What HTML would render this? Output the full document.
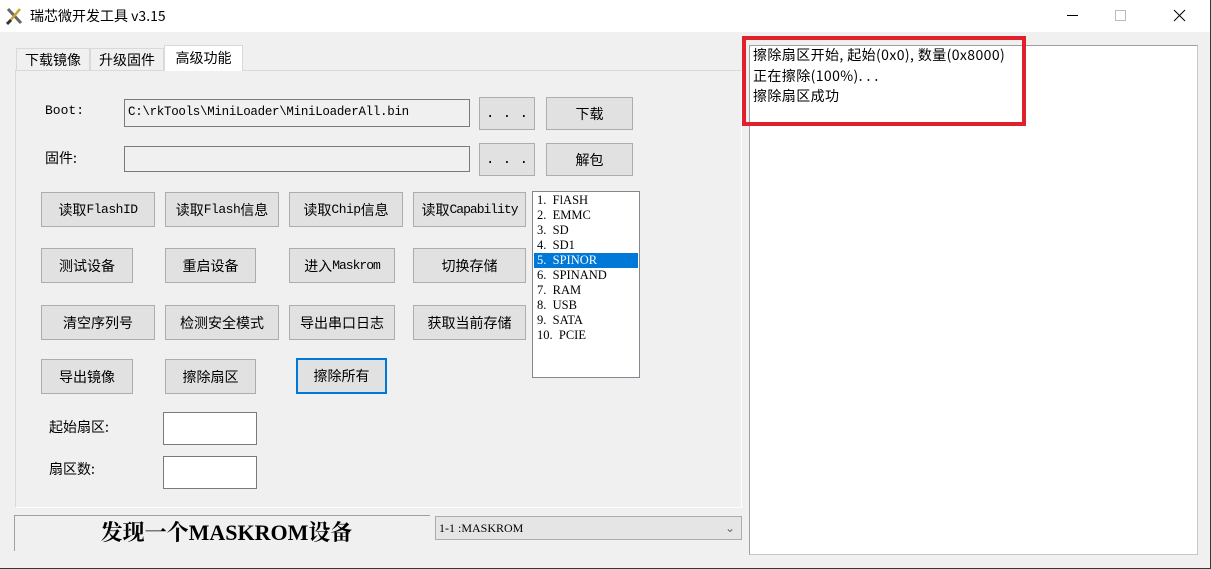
<!DOCTYPE html>
<html><head><meta charset="utf-8"><style>
*{margin:0;padding:0;box-sizing:border-box}
body{width:1211px;height:569px;background:#f0f0f0;position:relative;overflow:hidden;font-family:"Microsoft YaHei","Noto Sans CJK SC","Liberation Sans",sans-serif;font-size:14px;color:#000}
.a{position:absolute}
.title{left:0;top:0;width:1211px;height:32px;background:#fff}
.btn{position:absolute;background:#e1e1e1;border:1px solid #adadad;display:flex;align-items:center;justify-content:center;font-size:14px;white-space:nowrap;font-family:"Liberation Mono","Noto Sans CJK SC",monospace}
.btn span{font-family:"Noto Sans CJK SC",sans-serif}
.btn .m{font-family:"Liberation Mono",monospace;font-size:13px;letter-spacing:-0.5px}
.cj{font-family:"Noto Sans CJK SC",sans-serif}
.inp{position:absolute;background:#fff;border:1px solid #7a7a7a}
.mono{font-family:"Liberation Mono","Noto Serif CJK SC",monospace;font-size:13px}
.li{position:absolute;left:4px;font-family:"Liberation Serif",serif;font-size:12.5px;line-height:15px;white-space:pre;width:104px}
</style></head><body>
<div class="a title"></div>
<svg class="a" style="left:5px;top:6px" width="20" height="20" viewBox="0 0 20 20"><path d="M3 3 L16 17" stroke="#666" stroke-width="3"/><path d="M15 3 L4 16" stroke="#c9a032" stroke-width="2.5"/><path d="M2 18 L6 14" stroke="#333" stroke-width="3"/></svg>
<div class="a cj" style="left:30px;top:6px;font-size:14px">瑞芯微开发工具 v3.15</div>
<div class="a" style="left:1067px;top:15px;width:11px;height:1px;background:#000"></div>
<div class="a" style="left:1115px;top:10px;width:11px;height:11px;border:1px solid #bbb"></div>
<svg class="a" style="left:1173px;top:9px" width="13" height="13"><path d="M1 1L12 12M12 1L1 12" stroke="#000" stroke-width="1"/></svg>
<div class="a" style="left:1210px;top:0;width:1px;height:569px;background:#2f3b35"></div>
<div class="a" style="left:0;top:568px;width:1211px;height:1px;background:#2f3b35"></div>

<div class="a" style="left:15px;top:70px;width:727px;height:438px;background:#f0f0f0;border:1px solid #d9d9d9;border-bottom-color:#fff;border-right-color:#fff"></div>
<div class="a cj" style="left:16px;top:48px;width:74px;height:23px;border:1px solid #d9d9d9;border-bottom:none;text-align:center;line-height:22px">下载镜像</div>
<div class="a cj" style="left:90px;top:48px;width:74px;height:23px;border:1px solid #d9d9d9;border-bottom:none;text-align:center;line-height:22px">升级固件</div>
<div class="a cj" style="left:164px;top:45px;width:79px;height:26px;border:1px solid #d9d9d9;border-bottom:none;background:#fff;text-align:center;line-height:25px">高级功能</div>

<div class="a" style="left:45px;top:103px;font-family:'Liberation Mono',monospace;font-size:13px">Boot:</div>
<div class="inp mono" style="left:124px;top:99px;width:346px;height:28px;background:#f0f0f0;padding:5px 3px;font-size:12.5px;letter-spacing:-0.3px">C:\rkTools\MiniLoader\MiniLoaderAll.bin</div>
<div class="btn" style="left:479px;top:97px;width:56px;height:33px">. . .</div>
<div class="btn cj" style="left:546px;top:97px;width:87px;height:33px">下载</div>
<div class="a cj" style="left:45px;top:148px">固件:</div>
<div class="inp" style="left:124px;top:146px;width:346px;height:26px;background:#f0f0f0"></div>
<div class="btn" style="left:479px;top:143px;width:56px;height:33px">. . .</div>
<div class="btn cj" style="left:546px;top:143px;width:87px;height:33px">解包</div>

<div class="btn" style="left:41px;top:192px;width:114px;height:35px"><span>读取</span><b class="m" style="font-weight:normal">FlashID</b></div>
<div class="btn" style="left:165px;top:192px;width:114px;height:35px"><span>读取</span><b class="m" style="font-weight:normal">Flash</b><span>信息</span></div>
<div class="btn" style="left:289px;top:192px;width:114px;height:35px"><span>读取</span><b class="m" style="font-weight:normal">Chip</b><span>信息</span></div>
<div class="btn" style="left:413px;top:192px;width:113px;height:35px"><span>读取</span><b class="m" style="font-weight:normal;letter-spacing:-1px">Capability</b></div>

<div class="btn cj" style="left:41px;top:248px;width:92px;height:35px">测试设备</div>
<div class="btn cj" style="left:165px;top:248px;width:91px;height:35px">重启设备</div>
<div class="btn" style="left:289px;top:248px;width:106px;height:35px"><span>进入</span><b class="m" style="font-weight:normal;letter-spacing:-1px">Maskrom</b></div>
<div class="btn cj" style="left:413px;top:248px;width:113px;height:35px">切换存储</div>

<div class="btn cj" style="left:41px;top:305px;width:114px;height:35px">清空序列号</div>
<div class="btn cj" style="left:165px;top:305px;width:114px;height:35px">检测安全模式</div>
<div class="btn cj" style="left:289px;top:305px;width:106px;height:35px">导出串口日志</div>
<div class="btn cj" style="left:413px;top:305px;width:113px;height:35px">获取当前存储</div>

<div class="btn cj" style="left:41px;top:359px;width:92px;height:35px">导出镜像</div>
<div class="btn cj" style="left:165px;top:359px;width:91px;height:35px">擦除扇区</div>
<div class="btn cj" style="left:296px;top:358px;width:91px;height:36px;border:2px solid #0078d7">擦除所有</div>

<div class="a" style="left:532px;top:191px;width:108px;height:187px;background:#fff;border:1px solid #828790"></div>
<div class="a" style="left:533px;top:192px;width:106px">
<div class="li" style="top:1px">1.  FlASH</div>
<div class="li" style="top:16px">2.  EMMC</div>
<div class="li" style="top:31px">3.  SD</div>
<div class="li" style="top:46px">4.  SD1</div>
<div class="li" style="top:61px;left:1px;padding-left:3px;background:#0078d7;color:#fff">5.  SPINOR</div>
<div class="li" style="top:76px">6.  SPINAND</div>
<div class="li" style="top:91px">7.  RAM</div>
<div class="li" style="top:106px">8.  USB</div>
<div class="li" style="top:121px">9.  SATA</div>
<div class="li" style="top:136px">10.  PCIE</div>
</div>

<div class="a cj" style="left:49px;top:417px">起始扇区:</div>
<div class="inp" style="left:163px;top:412px;width:94px;height:33px"></div>
<div class="a cj" style="left:49px;top:459px">扇区数:</div>
<div class="inp" style="left:163px;top:456px;width:94px;height:33px"></div>

<div class="a" style="left:14px;top:515px;width:416px;height:36px;border-top:1px solid #a0a0a0;border-left:1px solid #a0a0a0;background:#f0f0f0;text-align:center;font-family:'Liberation Serif','Noto Serif CJK SC',serif;font-size:22px;font-weight:bold;line-height:34px;padding-left:8px">发现一个MASKROM设备</div>
<div class="a" style="left:435px;top:516px;width:307px;height:24px;border:1px solid #adadad;background:#e5e5e5;font-family:'Liberation Serif',serif;font-size:12px;line-height:22px;padding-left:3px">1-1 :MASKROM<span style="position:absolute;right:6px;top:0;color:#666">&#8964;</span></div>

<div class="a" style="left:749px;top:45px;width:449px;height:510px;background:#fff;border:1px solid #a0a0a0;border-right-color:#c8c8c8;border-bottom-color:#c8c8c8"></div>
<div class="a cj" style="left:753px;top:45px;font-size:14px;line-height:20.5px;letter-spacing:0.4px">擦除扇区开始, 起始(0x0), 数量(0x8000)<br>正在擦除(100%). . .<br>擦除扇区成功</div>
<div class="a" style="left:742px;top:36px;width:284px;height:90px;border:4px solid #e0202a"></div>
</body></html>
